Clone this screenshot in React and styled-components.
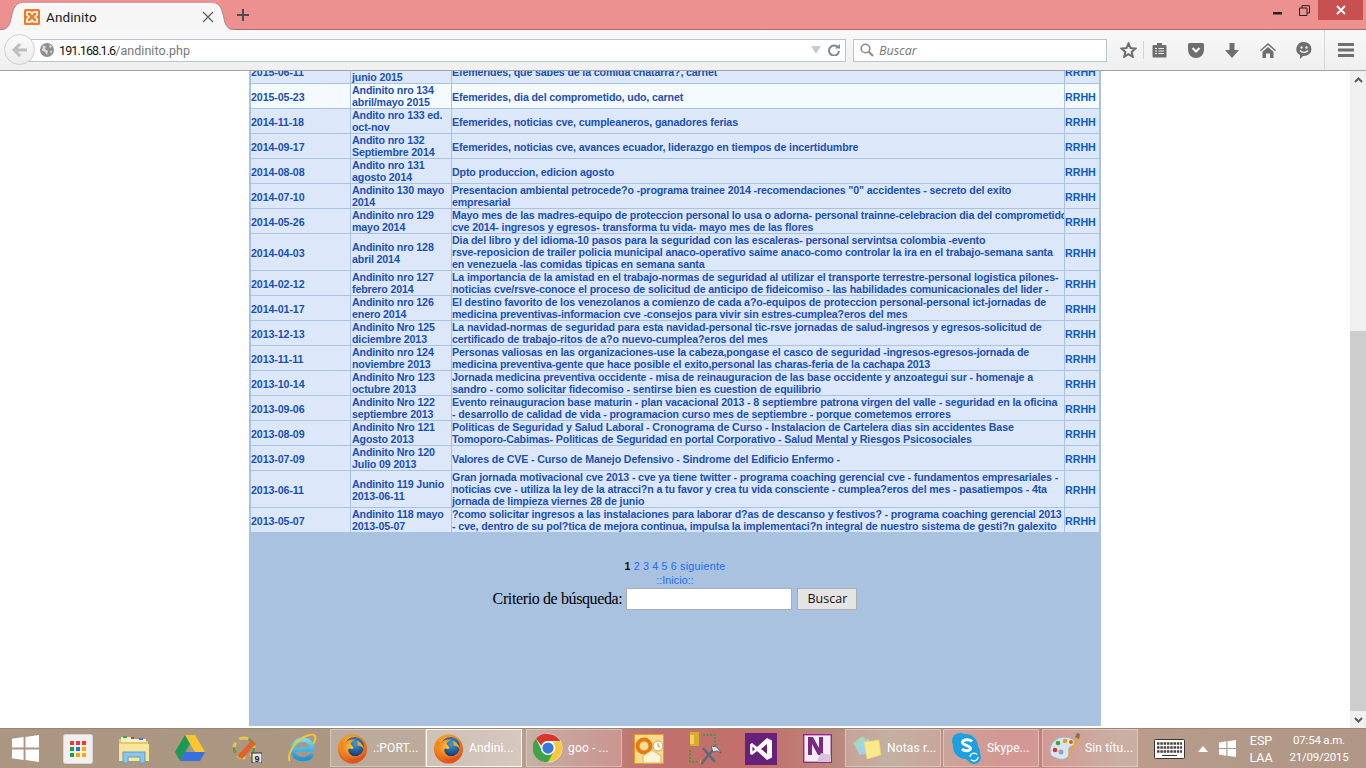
import React from "react";
import styled, { createGlobalStyle } from "styled-components";

const Global = createGlobalStyle`
  html, body { margin: 0; padding: 0; height: 100%; overflow: hidden; background: #fff; }
  #root { height: 100%; }
`;

const Screen = styled.div`
  width: 1366px; height: 768px; display: flex; flex-direction: column; overflow: hidden;
  font-family: "Liberation Sans", Arial, sans-serif;
`;

/* ---------- browser chrome ---------- */
const TabStrip = styled.div`
  height: 30px; flex: none; background: #ec9090; display: flex; align-items: flex-end;
  border-bottom: 1px solid #a86a6c; box-sizing: border-box; position: relative;
`;
const Tab = styled.div`display: flex; align-items: flex-end; height: 28px; margin-bottom: -1px; width: 235px; flex: none;`;
const TabEdge = styled.svg`width: 22px; height: 28px; flex: none; display: block;`;
const TabBody = styled.div`
  flex: 1; height: 27px; background: #f6f6f6; border-top: 1px solid #c9a3a3; display: flex; align-items: center; min-width: 0; padding-left: 2px; margin-right: -1px;
`;
const TabTitle = styled.span`
  font: 13.5px Roboto, "Open Sans", sans-serif; color: #1a1a1a; margin-left: 6px; flex: 1; letter-spacing: .1px;
`;
const NewTab = styled.svg`width: 14px; height: 14px; margin: 0 0 7px 1px; flex: none;`;
const WinControls = styled.div`margin-left: auto; display: flex; align-self: flex-start; align-items: flex-start; margin-right: 3px;`;
const WinBtn = styled.div`
  width: ${p => p.$w}px; height: 20px; display: flex; align-items: center; justify-content: center;
  background: ${p => p.$close ? "#c75050" : "transparent"};
`;

const NavBar = styled.div`
  height: 41px; flex: none; box-sizing: border-box; background: linear-gradient(#f8f8f8, #efefef);
  border-bottom: 1px solid #a3a3a3; display: flex; align-items: center; position: relative; padding-left: 20px;
`;
const BackBtn = styled.div`
  position: absolute; left: 4px; top: 4px; width: 31px; height: 31px; box-sizing: border-box; border-radius: 50%;
  background: linear-gradient(#fafafa, #ececec); border: 1px solid #cfcfcf; display: flex; align-items: center; justify-content: center; z-index: 1;
`;
const UrlBar = styled.div`
  flex: none; width: 826px; height: 23px; box-sizing: border-box; background: #fff; border: 1px solid #b9c4d2; border-left: 0;
  display: flex; align-items: center; padding-left: 20px; margin-right: 7px;
`;
const Url = styled.span`font: 12.5px Roboto, "Open Sans", sans-serif; color: #111; margin-left: 5px; flex: 1; letter-spacing: -.9px;`;
const UrlPath = styled.span`color: #777; letter-spacing: .05px;`;
const SearchBar = styled.div`
  flex: none; width: 254px; height: 23px; box-sizing: border-box; background: #fff; border: 1px solid #b9c4d2;
  display: flex; align-items: center; padding-left: 6px;
`;
const SearchText = styled.span`font: italic 12.5px "Open Sans", "Noto Sans", sans-serif; color: #777; margin-left: 5px;`;
const Tools = styled.div`display: flex; align-items: center; flex: none; margin-left: 13px;`;
const ToolSlot = styled.div`width: ${p => p.$w || 36}px; display: flex; justify-content: center; align-items: center; flex: none;`;
const ToolSep = styled.div`width: 1px; height: ${p => p.$h}px; background: #d5d5d5; flex: none; margin: ${p => p.$m};`;

/* ---------- page ---------- */
const Viewport = styled.div`flex: 1; display: flex; min-height: 0; background: #fff;`;
const PageArea = styled.div`flex: 1; overflow: hidden; display: flex; justify-content: center; align-items: flex-start;`;
const Panel = styled.div`
  width: 852px; height: 668px; flex: none; margin-top: -13px; background: #a8c2e0; box-sizing: border-box; padding: 0 1px;
`;
const Table = styled.table`
  width: 850px; table-layout: fixed; border-collapse: collapse; font: bold 8pt/12px "Liberation Sans", Arial, sans-serif;
`;
const Row = styled.tr`background: ${p => p.$light ? "#f5faff" : "#dce8fa"};`;
const Cell = styled.td`
  border: 1px solid #a8c2e4; padding: ${p => p.$nudge ? 2 : 0}px 0 0 ${p => p.$inset || 0}px; vertical-align: middle; white-space: nowrap; overflow: hidden;
  color: ${p => p.$accent ? "#0c58c8" : "#1a50b2"};
  letter-spacing: ${p => p.$track || 0}px;
`;
const TextLine = styled.div`display: block; height: 12px;`;
const Pager = styled.div`
  margin-top: 26px; text-align: center; font: 8pt/14px "Liberation Sans", Arial, sans-serif; color: #1a6cf0; letter-spacing: .3px;
`;
const PagerCurrent = styled.b`color: #111;`;
const PagerLink = styled.span`margin-left: 3px;`;
const Home = styled.div`text-align: center; font: 8pt/14px "Liberation Sans", Arial, sans-serif; color: #1a6cf0; letter-spacing: .1px;`;
const SearchForm = styled.div`display: flex; justify-content: center; align-items: center; gap: 4px; margin-top: 1px;`;
const FormLabel = styled.span`font: 16px "Liberation Serif", "Times New Roman", serif; color: #000; letter-spacing: -.38px;`;
const FormInput = styled.div`width: 166px; height: 22px; box-sizing: border-box; background: #fff; border: 1px solid #adadad;`;
const FormButton = styled.div`
  width: 60px; height: 22px; box-sizing: border-box; margin-left: 1px; background: #e4e4e4; border: 1px solid #adadad;
  font: 12.5px/20px "Open Sans", "Noto Sans", sans-serif; color: #111; text-align: center;
`;

const Scrollbar = styled.div`width: 16px; flex: none; background: #f0f0f0; display: flex; flex-direction: column; align-items: center;`;
const ScrollArrow = styled.div`height: 17px; flex: none; display: flex; align-items: center; justify-content: center;`;
const ScrollTrack = styled.div`flex: 1; align-self: stretch; display: flex; flex-direction: column; justify-content: flex-end;`;
const ScrollThumb = styled.div`height: 380px; background: #cdcdcd;`;

/* ---------- taskbar ---------- */
const Taskbar = styled.div`
  height: 40px; flex: none; display: flex; align-items: stretch; box-sizing: border-box;
  background: linear-gradient(90deg, #ab9781 0%, #ac9682 33%, #b8a090 38%, #bb8a80 42%, #c0706c 48%, #c4706c 56%, #b9887c 61%, #b59c8a 65%, #bb9384 68%, #c97f78 73%, #c87f78 76%, #bd9c8c 82%, #b39a88 90%, #b09684 100%);
  border-top: 1px solid #9a8574;
`;
const StartSlot = styled.div`width: 50px; display: flex; align-items: center; justify-content: center; flex: none;`;
const Pin = styled.div`width: 56px; display: flex; align-items: center; justify-content: center; flex: none;`;
const TaskBtn = styled.div`
  width: 96px; margin: 0 ${p => p.$mr || 0}px 1px 0; flex: none; box-sizing: border-box; display: flex; align-items: center; padding-left: 6px; gap: 5px;
  background: rgba(255,255,255,${p => p.$active ? ".42" : ".2"});
  border: 1px solid rgba(255,255,255,${p => p.$active ? ".85" : ".32"});
  font: 12px Roboto, "Open Sans", sans-serif; letter-spacing: .15px; color: #fff; white-space: nowrap; overflow: hidden;
`;
const Tray = styled.div`display: flex; align-items: center; margin-left: 16px; flex: none; color: #fff;`;
const TrayText = styled.div`
  font: ${p => p.$size}px/17px Roboto, "Open Sans", sans-serif; color: #fff; text-align: center; flex: none; width: ${p => p.$w}px; margin-left: ${p => p.$ml}px;
  letter-spacing: ${p => p.$track || 0}px;
`;
const Ico = styled.svg`display: block; flex: none;`;

/* ---------- icons ---------- */
const Firefox = ({ id }) => (
  <Ico width="31" height="31" viewBox="0 0 32 32">
    <defs>
      <radialGradient id={id + "a"} cx=".45" cy=".35" r=".7"><stop offset="0" stopColor="#ffcb3a" /><stop offset=".55" stopColor="#f28a1e" /><stop offset="1" stopColor="#d8401c" /></radialGradient>
      <radialGradient id={id + "b"} cx=".55" cy=".35" r=".7"><stop offset="0" stopColor="#3f9ad6" /><stop offset="1" stopColor="#12336f" /></radialGradient>
    </defs>
    <circle cx="16" cy="16.5" r="15" fill={`url(#${id}a)`} />
    <circle cx="18" cy="14" r="10" fill={`url(#${id}b)`} />
    <path d="M5 9c-2 7 1 16 9 19 7 2 13-2 15-7-4 4-10 5-14 2-3-2-4-5-3-7 2 0 4 1 5 0 0-2-2-3-3-5 1-2 3-3 5-4-5-1-8 0-10 3-1-1-3-1-4-1z" fill={`url(#${id}a)`} />
    <path d="M20 8c4 1 7 4 8 9-2-3-5-4-7-4 1-2 0-4-1-5z" fill="#f7a522" />
  </Ico>
);
const Chrome = () => (
  <Ico width="30" height="30" viewBox="0 0 32 32">
    <circle cx="16" cy="16" r="15.5" fill="#e8e8e8" />
    <path d="M16 1a15 15 0 0 1 13 7.5H16a7.5 7.5 0 0 0-7 5L3.3 6A15 15 0 0 1 16 1z" fill="#d9372c" />
    <path d="M29 8.500A15 15 0 0 1 16 31l6.500-11.300A7.500 7.500 0 0 0 21.300 10.500z" fill="#fcc934" />
    <path d="M3.300 6A15 15 0 0 0 16 31l6.500-11.300a7.500 7.500 0 0 1-12.700-.2z" fill="#3da545" />
    <circle cx="16" cy="16" r="7.500" fill="#fff" />
    <circle cx="16" cy="16" r="6" fill="#3a78d8" />
  </Ico>
);
const WinLogo = ({ size, color = "#fff", op = 1 }) => (
  <Ico width={size} height={size} viewBox="0 0 28 28" opacity={op}>
    <path d="M0 4l12-1.800V13H0zM14 2l14-2v13H14zM0 15h12v10.800L0 24zM14 15h14v13l-14-2z" fill={color} />
  </Ico>
);

const App = () => (
  <Screen>
    <Global />
    <TabStrip>
      <Tab>
        <TabEdge viewBox="0 0 22 28">
          <path d="M0 28c8 0 10-5 11-11C13 7 15 1 22 0v28z" fill="#f6f6f6" />
          <path d="M0 27.500c8 0 10-5 11-11C13 7 15 1 22 .5" fill="none" stroke="#b98585" />
        </TabEdge>
        <TabBody>
          <Ico width="16" height="16" viewBox="0 0 16 16">
            <rect width="16" height="16" rx="1.500" fill="#f07b26" />
            <path d="M3 3h3.500l1.500 2 1.500-2H13v3l-2 2 2 2v3H9.500L8 11l-1.500 2H3v-3l2-2-2-2z" fill="none" stroke="#fff" strokeWidth="1.700" />
          </Ico>
          <TabTitle>Andinito</TabTitle>
          <Ico width="12" height="12" viewBox="0 0 12 12">
            <path d="M1 1l10 10M11 1L1 11" stroke="#5c5c5c" strokeWidth="1.200" />
          </Ico>
        </TabBody>
        <TabEdge viewBox="0 0 22 28">
          <path d="M22 28c-8 0-10-5-11-11C9 7 7 1 0 0v28z" fill="#f6f6f6" />
          <path d="M22 27.500c-8 0-10-5-11-11C9 7 7 1 0 .5" fill="none" stroke="#b98585" />
        </TabEdge>
      </Tab>
      <NewTab viewBox="0 0 14 14"><path d="M7 1v12M1 7h12" stroke="#4f4a4a" strokeWidth="2" /></NewTab>
      <WinControls>
        <WinBtn $w={25}><Ico width="9" height="3" viewBox="0 0 9 3" style={{ marginTop: 7 }}><rect width="9" height="2.500" fill="#222" /></Ico></WinBtn>
        <WinBtn $w={28}>
          <Ico width="11" height="11" viewBox="0 0 11 11"><path d="M.5 3h7.500v7.500H.5zM3 3V.7h7.500V8H8" fill="none" stroke="#222" /></Ico>
        </WinBtn>
        <WinBtn $w={45} $close>
          <Ico width="10" height="10" viewBox="0 0 10 10"><path d="M1 1l8 8M9 1L1 9" stroke="#fff" strokeWidth="1.800" /></Ico>
        </WinBtn>
      </WinControls>
    </TabStrip>

    <NavBar>
      <BackBtn>
        <Ico width="16" height="14" viewBox="0 0 16 14"><path d="M8 1L2 7l6 6M2.500 7H15" fill="none" stroke="#bdbdbd" strokeWidth="3" /></Ico>
      </BackBtn>
      <UrlBar>
        <Ico width="14" height="14" viewBox="0 0 14 14">
          <circle cx="7" cy="7" r="7" fill="#8f8f8f" />
          <path d="M3 2.500l3 1-1 2.500 3 2-1 4-2-3-3-1.500zM9 1.500l3 2-2 2zM10 8l2.500-.5L11 11z" fill="#dcdcdc" />
        </Ico>
        <Url>191.168.1.6<UrlPath>/andinito.php</UrlPath></Url>
        <Ico width="10" height="8" viewBox="0 0 10 8" style={{ marginLeft: 2 }}><path d="M0 0h10L5 8z" fill="#c3ccd6" /></Ico>
        <Ico width="12" height="12" viewBox="0 0 12 12" style={{ margin: "0 5px 0 7px" }}>
          <path d="M10 3.500A5 5 0 1 0 11 7" fill="none" stroke="#7a8a9a" strokeWidth="2" /><path d="M7 4.500h5V0z" fill="#7a8a9a" />
        </Ico>
      </UrlBar>
      <SearchBar>
        <Ico width="14" height="14" viewBox="0 0 14 14">
          <circle cx="5.500" cy="5.500" r="4.300" fill="none" stroke="#8c8c8c" strokeWidth="1.600" /><path d="M8.500 8.500L13 13" stroke="#8c8c8c" strokeWidth="2.200" />
        </Ico>
        <SearchText>Buscar</SearchText>
      </SearchBar>
      <Tools>
        <Ico width="17" height="16" viewBox="0 0 17 16"><path d="M8.500 1.500l2 4.600 5 .5-3.800 3.300 1.100 4.900-4.300-2.600-4.300 2.600 1.100-4.900L1.500 6.600l5-.5z" fill="none" stroke="#6e6e6e" strokeWidth="2" /></Ico>
        <ToolSep $h={18} $m="0 8px 0 6px" />
        <ToolSlot $w={15}>
          <Ico width="15" height="16" viewBox="0 0 15 16"><path d="M1.500 3h3.500V1h5v2h3.500a1 1 0 0 1 1 1v10.500a1 1 0 0 1-1 1h-12a1 1 0 0 1-1-1V4a1 1 0 0 1 1-1z" fill="#6e6e6e" /><path d="M3 6.500h2M6.500 6.500h5.500M3 9h2M6.500 9h5.500M3 11.500h2M6.500 11.500h5.500" stroke="#eee" strokeWidth="1.200" /></Ico>
        </ToolSlot>
        <ToolSlot $w={57}>
          <Ico width="16" height="15" viewBox="0 0 16 15"><path d="M1.500 0h13A1.500 1.500 0 0 1 16 1.500V7A8 8 0 0 1 0 7V1.500A1.500 1.500 0 0 1 1.500 0z" fill="#6e6e6e" /><path d="M4.500 5L8 8.500 11.500 5" fill="none" stroke="#f2f2f2" strokeWidth="2.200" /></Ico>
        </ToolSlot>
        <ToolSlot $w={15}>
          <Ico width="14" height="15" viewBox="0 0 14 15"><path d="M4.500 0h5v7H14l-7 8-7-8h4.500z" fill="#6e6e6e" /></Ico>
        </ToolSlot>
        <ToolSlot $w={57}>
          <Ico width="16" height="15" viewBox="0 0 16 15"><path d="M8 0l8 7.200-.8 1L8 2 .8 8.200 0 7.200zM8 4l5.500 4.700V15H10v-4.500H6V15H2.500V8.700z" fill="#6e6e6e" /></Ico>
        </ToolSlot>
        <ToolSlot $w={15}>
          <Ico width="16" height="17" viewBox="0 0 16 17"><path d="M8 0a7.500 7 0 0 1 0 14h-1l-3 3v-4A7.500 7 0 0 1 8 0z" fill="#6e6e6e" /><circle cx="5.500" cy="5.500" r="1.200" fill="#eee" /><circle cx="10.500" cy="5.500" r="1.200" fill="#eee" /><path d="M4 8.500c2 2.500 6 2.500 8 0" fill="none" stroke="#eee" strokeWidth="1.500" /></Ico>
        </ToolSlot>
        <ToolSep $h={40} $m="0 13px 0 13px" />
        <Ico width="16" height="14" viewBox="0 0 16 14"><path d="M0 0h16v3H0zM0 5.500h16v3H0zM0 11h16v3H0z" fill="#6e6e6e" /></Ico>
      </Tools>
    </NavBar>

    <Viewport>
      <PageArea>
        <Panel>
          <Table>
            <colgroup><col style={{ width: 100 }} /><col style={{ width: 101 }} /><col style={{ width: 613 }} /><col style={{ width: 35 }} /></colgroup>
            <tbody>
              {ROWS.map((r, i) => (
                <Row key={r[0]} $light={i === 1}>
                  <Cell $nudge $track={-.1}>{r[0]}</Cell>
                  <Cell $inset={1} $track={-.15} $nudge={r[1].length < r[2].length}>{r[1].map(t => <TextLine key={t}>{t}</TextLine>)}</Cell>
                  <Cell $track={-.14} $nudge={r[2].length < r[1].length}>{r[2].map(t => <TextLine key={t}>{t}</TextLine>)}</Cell>
                  <Cell $accent $nudge>RRHH</Cell>
                </Row>
              ))}
            </tbody>
          </Table>
          <Pager>
            <PagerCurrent>1</PagerCurrent>
            {["2", "3", "4", "5", "6", "siguiente"].map(p => <PagerLink key={p}>{p}</PagerLink>)}
          </Pager>
          <Home>::Inicio::</Home>
          <SearchForm>
            <FormLabel>Criterio de búsqueda:</FormLabel>
            <FormInput />
            <FormButton>Buscar</FormButton>
          </SearchForm>
        </Panel>
      </PageArea>
      <Scrollbar>
        <ScrollArrow><Ico width="9" height="6" viewBox="0 0 9 6"><path d="M1 5l3.500-3.500L8 5" fill="none" stroke="#5a5a5a" strokeWidth="2" /></Ico></ScrollArrow>
        <ScrollTrack><ScrollThumb /></ScrollTrack>
        <ScrollArrow><Ico width="9" height="6" viewBox="0 0 9 6"><path d="M1 1l3.500 3.500L8 1" fill="none" stroke="#5a5a5a" strokeWidth="2" /></Ico></ScrollArrow>
      </Scrollbar>
    </Viewport>

    <Taskbar>
      <StartSlot><WinLogo size={27} /></StartSlot>
      <Pin>
        <Ico width="30" height="30" viewBox="0 0 30 30">
          <rect x=".5" y=".5" width="29" height="29" rx="2" fill="#f2f0ee" stroke="#d8d4d0" />
          {[["#f0392e", 7, 7], ["#f0392e", 13, 7], ["#f0392e", 19, 7], ["#1c9e4a", 7, 13], ["#1a78d8", 13, 13], ["#f9a800", 19, 13], ["#1c9e4a", 7, 19], ["#f9a800", 13, 19], ["#f9a800", 19, 19]].map(([c, x, y]) => (
            <rect key={x + "-" + y} x={x} y={y} width="4" height="4" fill={c} />
          ))}
        </Ico>
      </Pin>
      <Pin>
        <Ico width="32" height="30" viewBox="0 0 32 30">
          <path d="M1 5h11l2 2h16v20H1z" fill="#e9c766" />
          <path d="M3 3h9l2 2h14v3H3z" fill="#f6efcf" />
          <rect x="5" y="2" width="4" height="2" fill="#3da545" /><rect x="21" y="4" width="4" height="2" fill="#3a78d8" /><rect x="13" y="3" width="3" height="2" fill="#d9372c" />
          <path d="M1 10h30v17H1z" fill="#f7e59c" />
          <path d="M5 29V18h22v11h-5v-6H10v6z" fill="#8ec5e6" stroke="#5c9cc8" />
        </Ico>
      </Pin>
      <Pin>
        <Ico width="30" height="27" viewBox="0 0 30 27">
          <path d="M10 0h10L30 17H20z" fill="#fbc531" />
          <path d="M10 0L0 17l5 9 10-17z" fill="#1b9a54" />
          <path d="M5 26h20l5-9H10z" fill="#3a6fe0" />
        </Ico>
      </Pin>
      <Pin>
        <Ico width="32" height="28" viewBox="0 0 32 28">
          <circle cx="14" cy="13" r="10" fill="none" stroke="#e9c44a" strokeWidth="3" strokeDasharray="9 5" />
          <circle cx="14" cy="13" r="10" fill="none" stroke="#5a9a5a" strokeWidth="3" strokeDasharray="6 20" />
          <path d="M7 21L22 5l4 4-14 15z" fill="#e2622a" />
          <rect x="22" y="18" width="10" height="10" fill="#e8e8e8" stroke="#333" />
          <text x="27" y="26.500" fontSize="9" fontFamily="Liberation Sans" fontWeight="700" textAnchor="middle" fill="#222">9</text>
        </Ico>
      </Pin>
      <Pin>
        <Ico width="31" height="31" viewBox="0 0 32 32">
          <defs><linearGradient id="ie" x1="0" y1="0" x2="0" y2="1"><stop offset="0" stopColor="#6fdcf6" /><stop offset="1" stopColor="#1c92d8" /></linearGradient></defs>
          <path d="M7 17h19c.5-6-4-10-9.500-10S6 11 6 17s4 10 10.500 10c4.500 0 8-2 9.500-5.500" fill="none" stroke="url(#ie)" strokeWidth="4.500" />
          <path d="M10 14.500h12" stroke="url(#ie)" strokeWidth="3" />
          <path d="M3 29C0 25 5 13 13 7c6-4.500 14-7 16-4 1 2-.5 6-2 8" fill="none" stroke="#f1c92c" strokeWidth="2" />
        </Ico>
      </Pin>
      <TaskBtn><Firefox id="ff1" />.:PORT...</TaskBtn>
      <TaskBtn $active $mr={4}><Firefox id="ff2" />Andini...</TaskBtn>
      <TaskBtn><Chrome />goo - ...</TaskBtn>
      <Pin style={{ marginLeft: -1 }}>
        <Ico width="30" height="30" viewBox="0 0 30 30">
          <rect x=".5" y=".5" width="29" height="29" fill="#f8dc92" stroke="#e79a1c" />
          <circle cx="10" cy="12" r="6.500" fill="none" stroke="#e57a10" strokeWidth="4" />
          <path d="M9 22l9-6 9 6v7H9z" fill="#fff4d8" stroke="#e5b060" />
          <circle cx="24" cy="12" r="5" fill="#fff" stroke="#e59a30" /><path d="M24 9v3l2 1" stroke="#e57a10" fill="none" />
        </Ico>
      </Pin>
      <Pin>
        <Ico width="33" height="33" viewBox="0 0 33 33">
          <path d="M1 0h9v14H1z" fill="#d8ac2c" /><path d="M1 3h4v9H1z" fill="#f3d25c" />
          <path d="M14 3h12v11M1 18v12h10" fill="none" stroke="#2f9a3f" strokeWidth="1.500" strokeDasharray="2 1.500" />
          <path d="M12 32l12-14M14 16l12 14" stroke="#5a6a78" strokeWidth="2.500" />
          <path d="M22 14l6 1 4 6-4-2-4 1z" fill="#d7dee4" stroke="#4a5560" strokeWidth=".8" />
          <path d="M12 32l-2-2 2-2z" fill="#e3a732" />
        </Ico>
      </Pin>
      <Pin>
        <Ico width="32" height="32" viewBox="0 0 32 32">
          <rect width="32" height="32" fill="#68217a" />
          <path d="M22 5l5 2.500v17L22 27 12 18l-5 4-2-1.200V11.200L7 10l5 4zM22 11l-6 5 6 5zM7.500 13.500v5l2.500-2.500z" fill="#fff" fillRule="evenodd" />
        </Ico>
      </Pin>
      <Pin>
        <Ico width="29" height="29" viewBox="0 0 29 29">
          <rect x=".7" y=".7" width="27.600" height="27.600" fill="#f2ecf3" stroke="#93278f" strokeWidth="1.400" />
          <path d="M5 3h5l6 11V3h4v18h-5L9 10v11H5z" fill="#7a2a80" />
          <path d="M14 27l4-8 10 2v7H14z" fill="#d9c4dc" />
        </Ico>
      </Pin>
      <TaskBtn>
        <Ico width="30" height="26" viewBox="0 0 30 26">
          <path d="M1 8l10-7 7 11-10 7z" fill="#a5e0a0" />
          <path d="M5 6l12-2 2 14-12 2z" fill="#9fd2ef" />
          <path d="M12 7l15-2 2 15-14 4z" fill="#fbe98a" stroke="#e8d26a" strokeWidth=".6" />
        </Ico>
        Notas r...
      </TaskBtn>
      <TaskBtn $mr={2} style={{ marginLeft: 2, paddingLeft: 7 }}>
        <Ico width="31" height="33" viewBox="0 0 31 33">
          <circle cx="9" cy="9" r="8" fill="#1ba1e2" /><circle cx="20" cy="20" r="9" fill="#1ba1e2" />
          <circle cx="14.500" cy="14.500" r="12.500" fill="#1ba1e2" />
          <path d="M21 9.500c-1.500-2-8-3-9.500.5-1 3.500 8 3 8 6.500 0 3-6 3-8.500.5" fill="none" stroke="#fff" strokeWidth="3" />
          <circle cx="23" cy="25" r="7" fill="#1ba1e2" />
          <path d="M19 25a4 4 0 0 1 7-2.500M27 25a4 4 0 0 1-7 2.500" fill="none" stroke="#fff" strokeWidth="1.300" />
        </Ico>
        Skype...
      </TaskBtn>
      <TaskBtn style={{ marginLeft: 1 }}>
        <Ico width="31" height="32" viewBox="0 0 31 32">
          <path d="M1 20C0 11 8 5 15 5c7 0 12 3 11 7-1 3-5 1-6 4s1 6-1 9c-3 3-8 3-12 1-4-1-6-3-6-6z" fill="#d9e4ec" stroke="#9fb2c0" />
          <circle cx="6" cy="18" r="2.300" fill="#d9372c" /><circle cx="9" cy="11" r="2.300" fill="#3da545" /><circle cx="16" cy="9" r="2.300" fill="#e8a020" /><circle cx="22" cy="10" r="2" fill="#d86020" /><circle cx="12" cy="20" r="2.500" fill="#8ea2b2" />
          <path d="M28 4L19 25l-2 3 2-1 11-21z" fill="#f0a22a" />
          <path d="M26 5l2-4 3 1-1 5z" fill="#8a7050" />
        </Ico>
        Sin títu...
      </TaskBtn>
      <Tray>
        <Ico width="31" height="20" viewBox="0 0 31 20">
          <rect x=".5" y=".5" width="30" height="19" rx="1" fill="#fff" stroke="#3a3330" />
          <path d="M3 4.500h25M3 8.500h25M3 12.500h25" fill="none" stroke="#4a423c" strokeWidth="2.500" strokeDasharray="2.500 .8" />
          <path d="M8 16.500h15" stroke="#3a3330" />
        </Ico>
        <Ico width="10" height="6" viewBox="0 0 10 6" style={{ margin: "0 11px 0 13px" }}><path d="M0 6l5-6 5 6z" fill="#fff" /></Ico>
        <WinLogo size={17} />
        <TrayText $size={12.5} $w={24} $ml={13}>ESP<br />LAA</TrayText>
        <TrayText $size={11.5} $track={-.2} $w={62} $ml={15}>07:54 a.m.<br />21/09/2015</TrayText>
      </Tray>
    </Taskbar>
  </Screen>
);

const ROWS = [
  ["2015-06-11", ["Andinito nro 135", "junio 2015"], ["Efemerides, que sabes de la comida chatarra?, carnet"]],
  ["2015-05-23", ["Andinito nro 134", "abril/mayo 2015"], ["Efemerides, dia del comprometido, udo, carnet"]],
  ["2014-11-18", ["Andito nro 133 ed.", "oct-nov"], ["Efemerides, noticias cve, cumpleaneros, ganadores ferias"]],
  ["2014-09-17", ["Andito nro 132", "Septiembre 2014"], ["Efemerides, noticias cve, avances ecuador, liderazgo en tiempos de incertidumbre"]],
  ["2014-08-08", ["Andito nro 131", "agosto 2014"], ["Dpto produccion, edicion agosto"]],
  ["2014-07-10", ["Andinito 130 mayo", "2014"], ["Presentacion ambiental petrocede?o -programa trainee 2014 -recomendaciones \"0\" accidentes - secreto del exito", "empresarial"]],
  ["2014-05-26", ["Andinito nro 129", "mayo 2014"], ["Mayo mes de las madres-equipo de proteccion personal lo usa o adorna- personal trainne-celebracion dia del comprometido", "cve 2014- ingresos y egresos- transforma tu vida- mayo mes de las flores"]],
  ["2014-04-03", ["Andinito nro 128", "abril 2014"], ["Dia del libro y del idioma-10 pasos para la seguridad con las escaleras- personal servintsa colombia -evento", "rsve-reposicion de trailer policia municipal anaco-operativo saime anaco-como controlar la ira en el trabajo-semana santa", "en venezuela -las comidas tipicas en semana santa"]],
  ["2014-02-12", ["Andinito nro 127", "febrero 2014"], ["La importancia de la amistad en el trabajo-normas de seguridad al utilizar el transporte terrestre-personal logistica pilones-", "noticias cve/rsve-conoce el proceso de solicitud de anticipo de fideicomiso - las habilidades comunicacionales del lider -"]],
  ["2014-01-17", ["Andinito nro 126", "enero 2014"], ["El destino favorito de los venezolanos a comienzo de cada a?o-equipos de proteccion personal-personal ict-jornadas de", "medicina preventivas-informacion cve -consejos para vivir sin estres-cumplea?eros del mes"]],
  ["2013-12-13", ["Andinito Nro 125", "diciembre 2013"], ["La navidad-normas de seguridad para esta navidad-personal tic-rsve jornadas de salud-ingresos y egresos-solicitud de", "certificado de trabajo-ritos de a?o nuevo-cumplea?eros del mes"]],
  ["2013-11-11", ["Andinito nro 124", "noviembre 2013"], ["Personas valiosas en las organizaciones-use la cabeza,pongase el casco de seguridad -ingresos-egresos-jornada de", "medicina preventiva-gente que hace posible el exito,personal las charas-feria de la cachapa 2013"]],
  ["2013-10-14", ["Andinito Nro 123", "octubre 2013"], ["Jornada medicina preventiva occidente - misa de reinauguracion de las base occidente y anzoategui sur - homenaje a", "sandro - como solicitar fidecomiso - sentirse bien es cuestion de equilibrio"]],
  ["2013-09-06", ["Andinito Nro 122", "septiembre 2013"], ["Evento reinauguracion base maturin - plan vacacional 2013 - 8 septiembre patrona virgen del valle - seguridad en la oficina", "- desarrollo de calidad de vida - programacion curso mes de septiembre - porque cometemos errores"]],
  ["2013-08-09", ["Andinito Nro 121", "Agosto 2013"], ["Politicas de Seguridad y Salud Laboral - Cronograma de Curso - Instalacion de Cartelera dias sin accidentes Base", "Tomoporo-Cabimas- Politicas de Seguridad en portal Corporativo - Salud Mental y Riesgos Psicosociales"]],
  ["2013-07-09", ["Andinito Nro 120", "Julio 09 2013"], ["Valores de CVE - Curso de Manejo Defensivo - Sindrome del Edificio Enfermo -"]],
  ["2013-06-11", ["Andinito 119 Junio", "2013-06-11"], ["Gran jornada motivacional cve 2013 - cve ya tiene twitter - programa coaching gerencial cve - fundamentos empresariales -", "noticias cve - utiliza la ley de la atracci?n a tu favor y crea tu vida consciente - cumplea?eros del mes - pasatiempos - 4ta", "jornada de limpieza viernes 28 de junio"]],
  ["2013-05-07", ["Andinito 118 mayo", "2013-05-07"], ["?como solicitar ingresos a las instalaciones para laborar d?as de descanso y festivos? - programa coaching gerencial 2013", "- cve, dentro de su pol?tica de mejora continua, impulsa la implementaci?n integral de nuestro sistema de gesti?n galexito"]],
];

export default App;
